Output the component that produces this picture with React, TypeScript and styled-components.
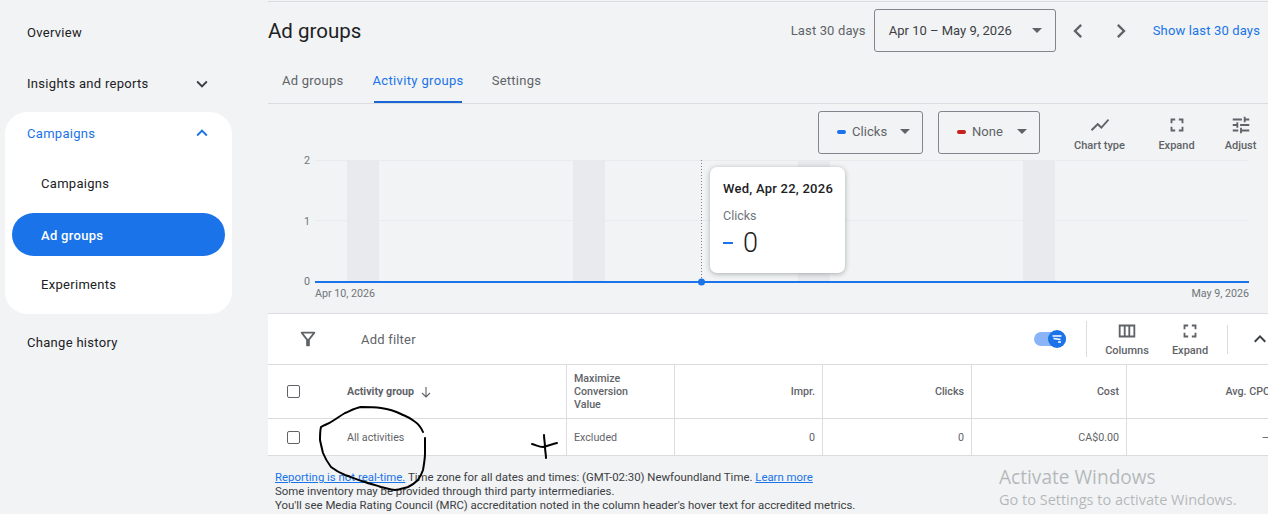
import styled, { createGlobalStyle } from 'styled-components';

const GlobalStyle = createGlobalStyle`
  html, body {
    margin: 0;
    padding: 0;
    background: #f1f3f4;
    font-family: Roboto, "Liberation Sans", sans-serif;
    color: #3c4043;
    overflow: hidden;
  }
`;

const Icon = ({ d, size = 24, color = '#5f6368' }: { d: string; size?: number; color?: string }) => (
  <svg width={size} height={size} viewBox="0 0 24 24" fill={color}>
    <path d={d} />
  </svg>
);

const ICONS = {
  up: 'M7.41 15.41 12 10.83l4.59 4.58L18 14l-6-6-6 6z',
  down: 'M7.41 8.59 12 13.17l4.59-4.58L18 10l-6 6-6-6z',
  left: 'M15.41 7.41 14 6l-6 6 6 6 1.41-1.41L10.83 12z',
  right: 'M8.59 16.59 10 18l6-6-6-6-1.41 1.41L13.17 12z',
  chart: 'M3.5 18.49l6-6.01 4 4L22 6.92l-1.41-1.41-7.09 7.97-4-4L2 16.99z',
  expand: 'M7 14H5v5h5v-2H7v-3zm-2-4h2V7h3V5H5v5zm12 7h-3v2h5v-5h-2v3zM14 5v2h3v3h2V5h-5z',
  tune: 'M3 17v2h6v-2H3zM3 5v2h10V5H3zm10 16v-2h8v-2h-8v-2h-2v6h2zM7 9v2H3v2h4v2h2V9H7zm14 4v-2H11v2h10zm-6-4h2V7h4V5h-4V3h-2v6z',
  filter: 'M7 6h10l-5.01 6.3L7 6zm-2.75-.39C6.27 8.2 10 13 10 13v6c0 .55.45 1 1 1h2c.55 0 1-.45 1-1v-6s3.73-4.8 5.75-7.39C20.26 4.95 19.79 4 18.95 4H5.04c-.83 0-1.3.95-.79 1.61z',
  columns: 'M3 5v14h18V5H3zm2 2h3.5v10H5V7zm5.5 0h3v10h-3V7zm5 0H19v10h-3.5V7z',
};

function App() {
  return (
    <Page>
      <GlobalStyle />
      <Sidebar>
        <NavItem>Overview</NavItem>
        <NavItem>
          Insights and reports
          <Icon d={ICONS.down} size={22} color="#3c4043" />
        </NavItem>
        <NavCard>
          <NavHeader>
            Campaigns
            <Icon d={ICONS.up} size={22} color="#1a73e8" />
          </NavHeader>
          <SubItem>Campaigns</SubItem>
          <SubItem $active>Ad groups</SubItem>
          <SubItem>Experiments</SubItem>
        </NavCard>
        <HistoryItem>Change history</HistoryItem>
      </Sidebar>

      <Main>
        <TitleRow>
          <Title>Ad groups</Title>
          <DateLabel>Last 30 days</DateLabel>
          <DateSelect>
            Apr 10 – May 9, 2026
            <Caret />
          </DateSelect>
          <ArrowGroup>
            <Icon d={ICONS.left} size={28} />
            <Icon d={ICONS.right} size={28} />
          </ArrowGroup>
          <ShowLink>Show last 30 days</ShowLink>
        </TitleRow>

        <Tabs>
          <Tab>Ad groups</Tab>
          <Tab $active>Activity groups</Tab>
          <Tab>Settings</Tab>
        </Tabs>

        <ChartControls>
          <MetricSelect $width={105}>
            <MetricDash $color="#1a73e8" />
            Clicks
            <Caret />
          </MetricSelect>
          <MetricSelect $width={102}>
            <MetricDash $color="#c5221f" />
            None
            <Caret />
          </MetricSelect>
          <ChartTools>
            <ToolButton $width={77}>
              <Icon d={ICONS.chart} size={22} />
              Chart type
            </ToolButton>
            <ToolButton $width={77}>
              <Icon d={ICONS.expand} size={22} />
              Expand
            </ToolButton>
            <ToolButton $width={51}>
              <Icon d={ICONS.tune} size={22} />
              Adjust
            </ToolButton>
          </ChartTools>
        </ChartControls>

        <ChartArea>
          <svg width="1000" height="159" viewBox="268 154 1000 159" fill="none">
            {[347, 573, 798, 1023].map((x) => (
              <rect key={x} x={x} y={160} width={32} height={122} fill="#e8eaed" />
            ))}
            {[160.5, 220.5].map((y) => (
              <line key={y} x1={315} x2={1249} y1={y} y2={y} stroke="#e8eaed" />
            ))}
            <line x1={701.5} x2={701.5} y1={160} y2={282} stroke="#80868b" strokeDasharray="1 2" />
            <line x1={315} x2={1249} y1={282} y2={282} stroke="#1a73e8" strokeWidth={2} />
            <circle cx={701.5} cy={282} r={3.5} fill="#1a73e8" />
            <g fontFamily="Roboto, sans-serif" fontSize={10.7} fill="#70757a">
              <text x={310} y={164} textAnchor="end">2</text>
              <text x={310} y={225} textAnchor="end">1</text>
              <text x={310} y={285} textAnchor="end">0</text>
              <text x={315} y={297}>Apr 10, 2026</text>
              <text x={1249} y={297} textAnchor="end">May 9, 2026</text>
            </g>
          </svg>
          <Tooltip>
            <TooltipDate>Wed, Apr 22, 2026</TooltipDate>
            <TooltipMetric>Clicks</TooltipMetric>
            <TooltipValue>
              <TooltipDash />0
            </TooltipValue>
          </Tooltip>
        </ChartArea>

        <FilterBar>
          <FilterIcon>
            <Icon d={ICONS.filter} size={22} />
          </FilterIcon>
          <AddFilter>Add filter</AddFilter>
          <Toggle>
            <ToggleKnob>
              <svg width="12" height="12" viewBox="0 0 12 12" fill="none" stroke="#fff" strokeWidth="1.6">
                <path d="M1.5 3h9M2.5 5.5l7 1M7 9h3" />
              </svg>
            </ToggleKnob>
          </Toggle>
          <BarDivider $left={20} $height={36} />
          <BarTool $width={80}>
            <Icon d={ICONS.columns} size={22} />
            Columns
          </BarTool>
          <BarTool $width={46}>
            <Icon d={ICONS.expand} size={22} />
            Expand
          </BarTool>
          <BarDivider $left={14} $height={29} />
          <CollapseIcon>
            <Icon d={ICONS.up} size={24} color="#3c4043" />
          </CollapseIcon>
        </FilterBar>

        <TableRow $height={54}>
          <CheckCell><Checkbox /></CheckCell>
          <NameHead>
            Activity group
            <svg width="14" height="14" viewBox="0 0 14 14" fill="none" stroke="#5f6368" strokeWidth="1.1">
              <path d="M7 2v10M3 8l4 4 4-4" />
            </svg>
          </NameHead>
          <ConversionHead>Maximize Conversion Value</ConversionHead>
          <NumHead>Impr.</NumHead>
          <NumHead>Clicks</NumHead>
          <NumHead>Cost</NumHead>
          <NumHead $clip>Avg. CPC</NumHead>
        </TableRow>
        <TableRow $height={37}>
          <CheckCell><Checkbox /></CheckCell>
          <NameCell>All activities</NameCell>
          <TextCell>Excluded</TextCell>
          <NumCell>0</NumCell>
          <NumCell>0</NumCell>
          <NumCell>CA$0.00</NumCell>
          <NumCell $clip>—</NumCell>
        </TableRow>

        <Footer>
          <FooterLink>Reporting is not real-time.</FooterLink> Time zone for all dates and times: (GMT-02:30) Newfoundland Time.{' '}
          <FooterLink>Learn more</FooterLink>
          <br />
          Some inventory may be provided through third party intermediaries.
          <br />
          You'll see Media Rating Council (MRC) accreditation noted in the column header's hover text for accredited metrics.
        </Footer>
      </Main>

      <Scribble width="1268" height="514" viewBox="0 0 1268 514" fill="none" stroke="#000" strokeWidth="2" strokeLinecap="round">
        <path d="M423 432C421 427 417 423 414 421C409 417 405 416 401 414C395 411 388 409 381 408C374 407 367 407 361 407C355 408 350 411 345 413C340 416 336 419 331 422C328 424 324 425 321 427C320 431 320 436 320 440C321 445 322 449 323 453C325 458 328 463 331 467C335 470 340 473 345 475C351 477 358 480 365 482C370 484 376 485 381 487C386 488 390 490 395 490C399 490 404 488 408 487C412 485 415 483 418 480C420 477 422 473 423 470C424 464 425 459 425 453C425 448 425 443 425 438" />
        <path d="M532 444C536 445 539 447 543 447C548 446 552 444 557 443" />
        <path d="M544 435C544 439 545 443 545 447C545 451 546 454 546 458" />
      </Scribble>

      <Watermark>
        <WatermarkTitle>Activate Windows</WatermarkTitle>
        <WatermarkText>Go to Settings to activate Windows.</WatermarkText>
      </Watermark>
    </Page>
  );
}

const Page = styled.div`
  position: relative;
  display: flex;
  width: 1268px;
  height: 514px;
  overflow: hidden;
  background: #f1f3f4;
`;

const Sidebar = styled.nav`
  flex: 0 0 268px;
  display: flex;
  flex-direction: column;
  padding: 7px 0 0 5px;
  box-sizing: border-box;
`;

const NavItem = styled.div`
  display: flex;
  align-items: center;
  justify-content: space-between;
  box-sizing: border-box;
  width: 208px;
  height: 50px;
  margin-bottom: 1.5px;
  padding-left: 22px;
  font-size: 13px;
  letter-spacing: 0.3px;
  color: #202124;
`;

const NavCard = styled.div`
  display: flex;
  flex-direction: column;
  gap: 8px;
  width: 227px;
  margin-top: 2px;
  padding-bottom: 7px;
  border-radius: 22px;
  background: #fff;
`;

const NavHeader = styled(NavItem)`
  height: 42px;
  margin: 0;
  color: #1a73e8;
`;

const SubItem = styled.div<{ $active?: boolean }>`
  display: flex;
  align-items: center;
  height: 43px;
  box-sizing: border-box;
  margin: 0 7px;
  padding-left: 29px;
  padding-top: ${(p) => (p.$active ? 1 : 0)}px;
  border-radius: 22px;
  font-size: 13px;
  letter-spacing: 0.3px;
  font-weight: ${(p) => (p.$active ? 500 : 400)};
  color: ${(p) => (p.$active ? '#fff' : '#202124')};
  background: ${(p) => (p.$active ? '#1a73e8' : 'transparent')};
  &:last-child {
    padding-bottom: 2px;
  }
`;

const HistoryItem = styled(NavItem)`
  margin-top: 3px;
`;

const Main = styled.main`
  flex: 1;
  min-width: 0;
  margin-top: 1px;
  border-top: 1px solid #dadce0;
`;

const TitleRow = styled.div`
  display: flex;
  align-items: center;
  height: 57px;
  padding-right: 8px;
`;

const Title = styled.h1`
  flex: 1;
  margin: 0;
  font-size: 20.5px;
  font-weight: 400;
  color: #202124;
`;

const DateLabel = styled.span`
  margin-right: 8px;
  font-size: 13px;
  letter-spacing: 0.15px;
  color: #5f6368;
`;

const DateSelect = styled.div`
  display: flex;
  align-items: center;
  justify-content: space-between;
  box-sizing: border-box;
  width: 182px;
  height: 43px;
  padding: 0 13px 0 14px;
  border: 1px solid #80868b;
  border-radius: 3px;
  font-size: 13px;
  color: #3c4043;
`;

const Caret = styled.span`
  width: 0;
  height: 0;
  margin-left: auto;
  border-left: 5px solid transparent;
  border-right: 5px solid transparent;
  border-top: 5px solid #5f6368;
`;

const ArrowGroup = styled.div`
  display: flex;
  gap: 15px;
  margin: 0 18px 0 8px;
`;

const ShowLink = styled.a`
  font-size: 13px;
  letter-spacing: 0.15px;
  color: #1a73e8;
`;

const Tabs = styled.div`
  display: flex;
  box-sizing: border-box;
  height: 45px;
  padding-left: 14px;
  gap: 28px;
  border-bottom: 1px solid #dadce0;
`;

const Tab = styled.div<{ $active?: boolean }>`
  position: relative;
  display: flex;
  align-items: center;
  height: 44px;
  margin-left: ${(p) => (p.$active ? 1 : 0)}px;
  padding-bottom: 1px;
  box-sizing: border-box;
  font-size: 13px;
  letter-spacing: ${(p) => (p.$active ? 0.35 : 0.25)}px;
  color: ${(p) => (p.$active ? '#1a73e8' : '#5f6368')};
  &::after {
    content: '';
    display: ${(p) => (p.$active ? 'block' : 'none')};
    position: absolute;
    left: 2px;
    right: 2px;
    bottom: 0;
    height: 2px;
    background: #1a66d6;
  }
`;

const ChartControls = styled.div`
  display: flex;
  align-items: flex-start;
  gap: 15px;
  height: 50px;
  padding: 7px 0 0 550px;
  box-sizing: border-box;
`;

const MetricSelect = styled.div<{ $width: number }>`
  display: flex;
  flex-shrink: 0;
  align-items: center;
  box-sizing: border-box;
  width: ${(p) => p.$width}px;
  height: 43px;
  padding: 0 12px 2px 18px;
  border: 1px solid #80868b;
  border-radius: 3px;
  font-size: 13px;
  letter-spacing: 0.05px;
  color: #5f6368;
`;

const MetricDash = styled.span<{ $color: string }>`
  width: 9px;
  height: 4px;
  margin-right: 6px;
  border-radius: 2px;
  background: ${(p) => p.$color};
`;

const ChartTools = styled.div`
  display: flex;
  flex-shrink: 0;
  margin-left: 6px;
`;

const ToolButton = styled.div<{ $width: number }>`
  display: flex;
  flex-direction: column;
  align-items: center;
  gap: 3px;
  width: ${(p) => p.$width}px;
  padding-top: 3px;
  font-size: 11px;
  font-weight: 500;
  line-height: 14px;
  color: #5f6368;
  white-space: nowrap;
`;

const ChartArea = styled.div`
  position: relative;
  height: 159px;
  overflow: hidden;
  svg {
    display: block;
  }
`;

const Tooltip = styled.div`
  position: absolute;
  left: 442px;
  top: 13px;
  box-sizing: border-box;
  width: 135px;
  height: 106px;
  padding: 14px 13px;
  border-radius: 7px;
  background: #fff;
  box-shadow: 0 1px 5px rgba(60, 64, 67, 0.4);
`;

const TooltipDate = styled.div`
  font-size: 13px;
  font-weight: 500;
  line-height: 15px;
  letter-spacing: 0.25px;
  color: #202124;
  white-space: nowrap;
`;

const TooltipMetric = styled.div`
  margin-top: 12px;
  font-size: 12.5px;
  line-height: 15px;
  color: #70757a;
`;

const TooltipValue = styled.div`
  display: flex;
  align-items: center;
  margin-top: 4px;
  font-size: 27px;
  font-weight: 300;
  line-height: 32px;
  color: #202124;
`;

const TooltipDash = styled.span`
  width: 10px;
  height: 2px;
  margin-right: 10px;
  background: #1a73e8;
`;

const FilterBar = styled.div`
  display: flex;
  align-items: center;
  box-sizing: border-box;
  height: 52px;
  background: #fff;
  border-top: 1px solid #dadce0;
  border-bottom: 1px solid #dadce0;
`;

const FilterIcon = styled.div`
  display: flex;
  margin-left: 29px;
`;

const AddFilter = styled.div`
  flex: 1;
  margin-left: 42px;
  font-size: 13px;
  letter-spacing: 0.2px;
  color: #5f6368;
`;

const Toggle = styled.div`
  position: relative;
  width: 32px;
  height: 14px;
  border-radius: 7px;
  background: #8ab4f8;
`;

const ToggleKnob = styled.div`
  position: absolute;
  right: 0;
  top: -2px;
  display: flex;
  align-items: center;
  justify-content: center;
  width: 18px;
  height: 18px;
  border-radius: 50%;
  background: #1a73e8;
`;

const BarDivider = styled.div<{ $left: number; $height: number }>`
  width: 1px;
  height: ${(p) => p.$height}px;
  margin-left: ${(p) => p.$left}px;
  background: #dadce0;
`;

const BarTool = styled.div<{ $width: number }>`
  display: flex;
  flex-direction: column;
  align-items: center;
  gap: 2px;
  width: ${(p) => p.$width}px;
  font-size: 11px;
  font-weight: 500;
  line-height: 14px;
  color: #5f6368;
`;

const CollapseIcon = styled.div`
  display: flex;
  margin: 0 -4px 0 20px;
`;

const TableRow = styled.div<{ $height: number }>`
  display: grid;
  grid-template-columns: 60px 239px 108px 148px 149px 155px 1fr;
  box-sizing: border-box;
  height: ${(p) => p.$height}px;
  background: #fff;
  border-bottom: 1px solid #dadce0;
  overflow: hidden;
`;

const CheckCell = styled.div`
  display: flex;
  align-items: center;
  padding-left: 19px;
`;

const Checkbox = styled.span`
  box-sizing: border-box;
  width: 13px;
  height: 13px;
  border: 1px solid #5f6368;
  border-radius: 2px;
`;

const NameHead = styled.div`
  display: flex;
  align-items: center;
  gap: 5px;
  padding-left: 19px;
  border-right: 1px solid #dadce0;
  font-size: 10.7px;
  font-weight: 700;
  color: #5f6368;
`;

const ConversionHead = styled.div`
  display: flex;
  align-items: center;
  padding: 0 30px 0 7px;
  border-right: 1px solid #dadce0;
  font-size: 10.7px;
  font-weight: 500;
  line-height: 13px;
  color: #5f6368;
`;

const NumHead = styled.div<{ $clip?: boolean }>`
  display: flex;
  align-items: center;
  justify-content: flex-end;
  padding-right: ${(p) => (p.$clip ? 0 : 7)}px;
  border-right: ${(p) => (p.$clip ? 'none' : '1px solid #dadce0')};
  font-size: 10.7px;
  font-weight: 500;
  color: #5f6368;
  white-space: nowrap;
  margin-right: ${(p) => (p.$clip ? -2 : 0)}px;
`;

const NameCell = styled.div`
  display: flex;
  align-items: center;
  padding-left: 19px;
  border-right: 1px solid #dadce0;
  font-size: 10.7px;
  color: #5f6368;
`;

const TextCell = styled(NameCell)`
  padding-left: 7px;
`;

const NumCell = styled(NumHead)`
  font-weight: 400;
`;

const Footer = styled.footer`
  padding: 14px 0 0 7px;
  font-size: 11.4px;
  line-height: 14px;
  color: #3c4043;
  white-space: nowrap;
`;

const FooterLink = styled.a`
  color: #1a73e8;
  text-decoration: underline;
`;

const Scribble = styled.svg`
  position: absolute;
  inset: 0;
  pointer-events: none;
`;

const Watermark = styled.div`
  position: absolute;
  left: 999px;
  top: 465px;
  font-family: "Open Sans", sans-serif;
  color: rgba(120, 124, 128, 0.5);
  white-space: nowrap;
  pointer-events: none;
`;

const WatermarkTitle = styled.div`
  font-size: 19.1px;
  line-height: 24px;
`;

const WatermarkText = styled.div`
  font-size: 14.5px;
  line-height: 21px;
`;

export default App;
